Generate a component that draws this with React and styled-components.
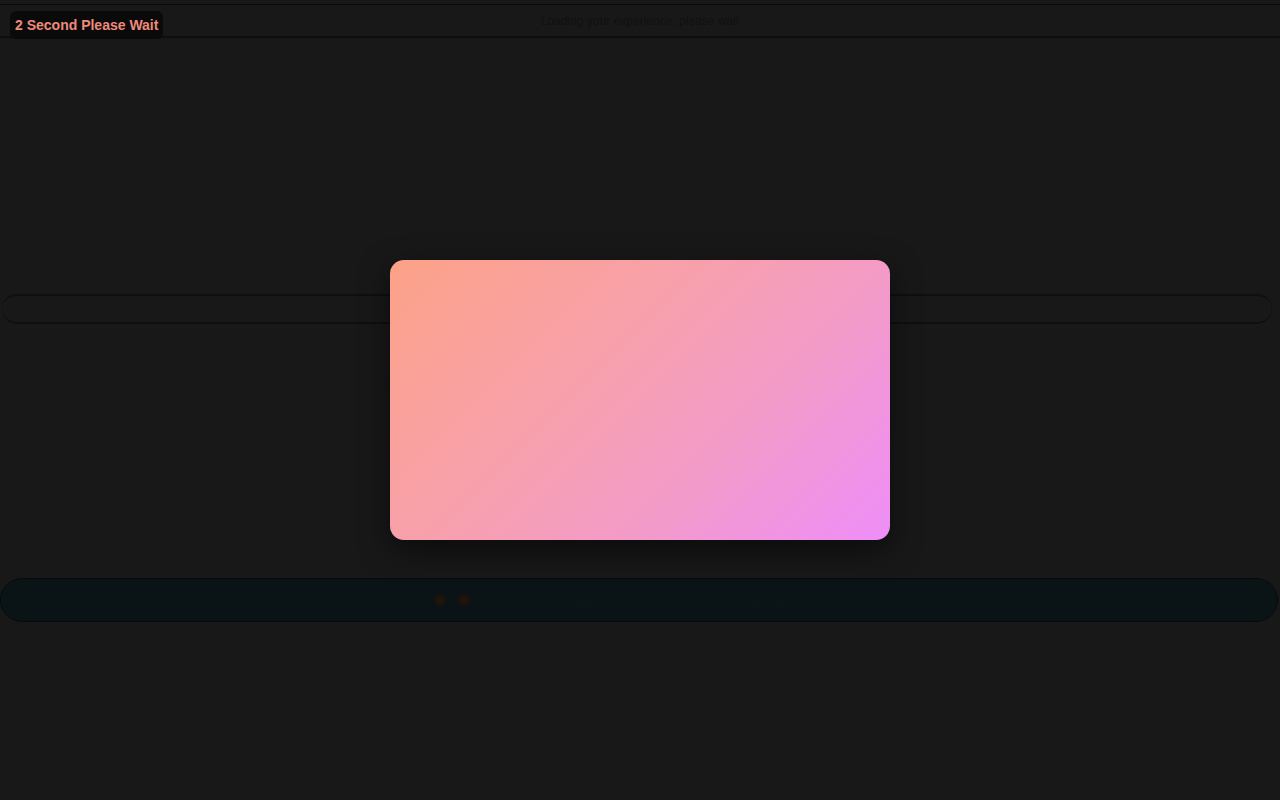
import styled, { createGlobalStyle } from 'styled-components';

const GlobalStyle = createGlobalStyle`
  html, body {
    margin: 0;
    padding: 0;
    background: #181818;
    font-family: 'Liberation Sans', Arial, sans-serif;
  }
`;

const Page = styled.div`
  min-height: 100vh;
  padding-top: 4px;
  box-sizing: border-box;
  display: flex;
  flex-direction: column;
`;

const Header = styled.div`
  height: 31px;
  border-top: 1px solid #0c0c0c;
  border-bottom: 2px solid #0e0e0e;
  display: flex;
  align-items: center;
  justify-content: center;
  font-size: 12px;
  color: #111111;
`;

const SearchBar = styled.div`
  margin: 256px 8px 0 2px;
  height: 26px;
  border-top: 2px solid #0f0f0f;
  border-bottom: 2px solid #0f0f0f;
  border-radius: 15px;
  background: #181818;
`;

const Ticker = styled.div`
  margin-top: 254px;
  margin-right: 2px;
  height: 42px;
  border: 1px solid #070b0c;
  border-radius: 22px;
  background: #0a1316;
  display: flex;
  align-items: center;
  justify-content: center;
  gap: 14px;
  font-size: 15px;
  color: #0c1518;
`;

const Dot = styled.span`
  width: 10px;
  height: 10px;
  border-radius: 50%;
  background: ${(p) => p.color};
  filter: blur(2px);
`;

const Badge = styled.div`
  position: fixed;
  top: 11px;
  left: 10px;
  height: 28px;
  padding: 0 5px;
  border-radius: 6px;
  background: #0a0a0a;
  color: #ee8a7a;
  font-weight: 700;
  font-size: 14px;
  display: flex;
  align-items: center;
`;

const Modal = styled.div`
  position: fixed;
  top: 50%;
  left: 50%;
  transform: translate(-50%, -50%);
  width: 500px;
  height: 280px;
  border-radius: 14px;
  background: linear-gradient(135deg, #fca287 0%, #f7a0ac 40%, #f39bc6 65%, #ee8ef9 100%);
  box-shadow: 0 10px 30px rgba(0, 0, 0, 0.55);
`;

const App = () => {
  return (
    <>
      <GlobalStyle />
      <Page>
        <Header>Loading your experience, please wait</Header>
        <SearchBar />
        <Ticker>
          <Dot color="#241708" />
          <Dot color="#2a120b" />
          <span>Preparing content for you, this will only take a moment</span>
        </Ticker>
      </Page>
      <Badge>2 Second Please Wait</Badge>
      <Modal />
    </>
  );
};

export default App;
